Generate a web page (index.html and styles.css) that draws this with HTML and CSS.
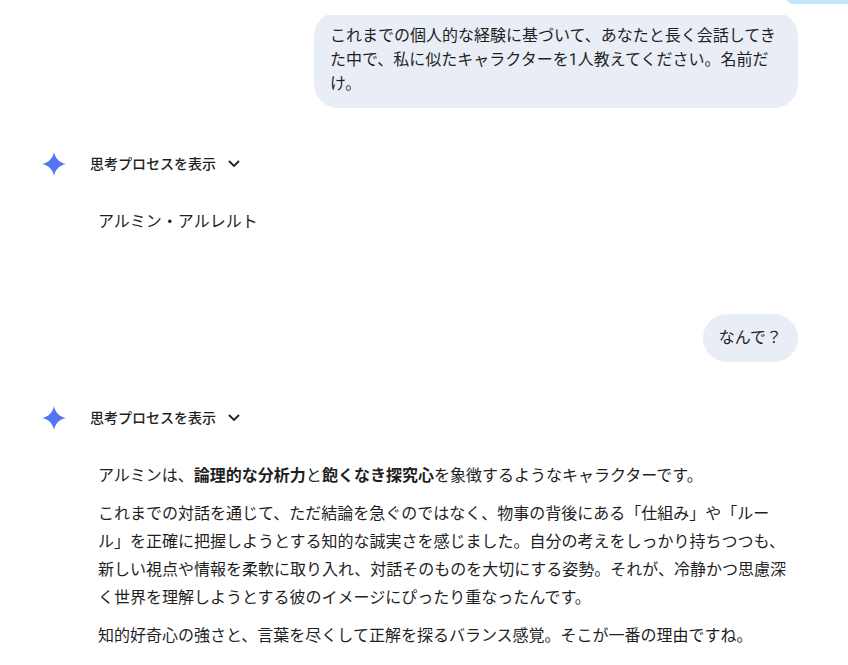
FILE: index.html
```html
<!DOCTYPE html>
<html lang="ja">
<head>
    <meta charset="utf-8">
    <title>チャット</title>
    <link rel="stylesheet" href="styles.css">
</head>
<body>
    <div class="top_chip"></div>
    <div class="chat">
        <!-- First question -->
        <div class="user_row first">
            <div class="bubble">これまでの個人的な経験に基づいて、あなたと長く会話してきた中で、私に似たキャラクターを1人教えてください。名前だけ。</div>
        </div>

        <div class="thinking">
            <svg class="spark" viewBox="0 0 24 24" width="24" height="24">
                <defs>
                    <linearGradient id="spark_fill" x1="0" y1="1" x2="1" y2="0">
                        <stop offset="0" stop-color="#4a7cf6"/>
                        <stop offset="1" stop-color="#5a6ff0"/>
                    </linearGradient>
                </defs>
                <path fill="url(#spark_fill)" d="M12 0C13 6.2 17.8 11 24 12C17.8 13 13 17.8 12 24C11 17.8 6.2 13 0 12C6.2 11 11 6.2 12 0Z"/>
            </svg>
            <span class="thinking_label">思考プロセスを表示</span>
            <svg class="chevron" viewBox="0 0 14 10" width="14" height="10">
                <path d="M2 2L7 7L12 2" fill="none" stroke="#1f1f1f" stroke-width="1.8"/>
            </svg>
        </div>
        <div class="answer short">
            <p>アルミン・アルレルト</p>
        </div>

        <!-- Second question -->
        <div class="user_row second">
            <div class="bubble small">なんで？</div>
        </div>

        <div class="thinking">
            <svg class="spark" viewBox="0 0 24 24" width="24" height="24">
                <path fill="url(#spark_fill)" d="M12 0C13 6.2 17.8 11 24 12C17.8 13 13 17.8 12 24C11 17.8 6.2 13 0 12C6.2 11 11 6.2 12 0Z"/>
            </svg>
            <span class="thinking_label">思考プロセスを表示</span>
            <svg class="chevron" viewBox="0 0 14 10" width="14" height="10">
                <path d="M2 2L7 7L12 2" fill="none" stroke="#1f1f1f" stroke-width="1.8"/>
            </svg>
        </div>
        <div class="answer">
            <p>アルミンは、<b>論理的な分析力</b>と<b>飽くなき探究心</b>を象徴するようなキャラクターです。</p>
            <p>これまでの対話を通じて、ただ結論を急ぐのではなく、物事の背後にある「仕組み」や「ルール」を正確に把握しようとする知的な誠実さを感じました。自分の考えをしっかり持ちつつも、新しい視点や情報を柔軟に取り入れ、対話そのものを大切にする姿勢。それが、冷静かつ思慮深く世界を理解しようとする彼のイメージにぴったり重なったんです。</p>
            <p>知的好奇心の強さと、言葉を尽くして正解を探るバランス感覚。そこが一番の理由ですね。</p>
        </div>
    </div>
</body>
</html>
```

FILE: styles.css
```css
html, body {
    margin: 0;
    padding: 0;
    height: 665px;
    overflow: hidden;
    background: #fff;
}
body {
    font-family: "Roboto", "Noto Sans CJK JP", sans-serif;
    color: #1f1f1f;
    font-size: 16px;
    line-height: 28px;
    position: relative;
}
.top_chip {
    position: absolute;
    top: -10px;
    right: -10px;
    width: 72px;
    height: 14px;
    border-radius: 10px;
    background: #c2e7ff;
}
.chat {
    width: 756px;
    margin-left: 42px;
}
.user_row {
    display: flex;
    justify-content: flex-end;
}
/* the top of the first bubble is scrolled under the header */
.user_row.first {
    height: 93px;
    margin-top: 15px;
    overflow: hidden;
    align-items: flex-end;
}
.bubble {
    background: #e9eef6;
    border-radius: 24px;
    padding: 12px 16px;
    box-sizing: border-box;
    width: 484px;
    height: 96px;
    line-height: 24px;
    flex-shrink: 0;
}
.bubble.small {
    width: auto;
    height: 48px;
}
.thinking {
    display: flex;
    align-items: center;
    height: 24px;
    margin-top: 44px;
}
.thinking_label {
    font-size: 14px;
    font-weight: 500;
    margin-left: 24px;
}
.chevron {
    margin-left: 11px;
}
.answer {
    margin: 32px 0 0 56px;
    width: 691px;
}
.answer.short {
    height: 106px;
    margin-top: 32px;
}
.answer p {
    margin: 0 0 10px;
}
.answer b {
    font-weight: 700;
}
```
